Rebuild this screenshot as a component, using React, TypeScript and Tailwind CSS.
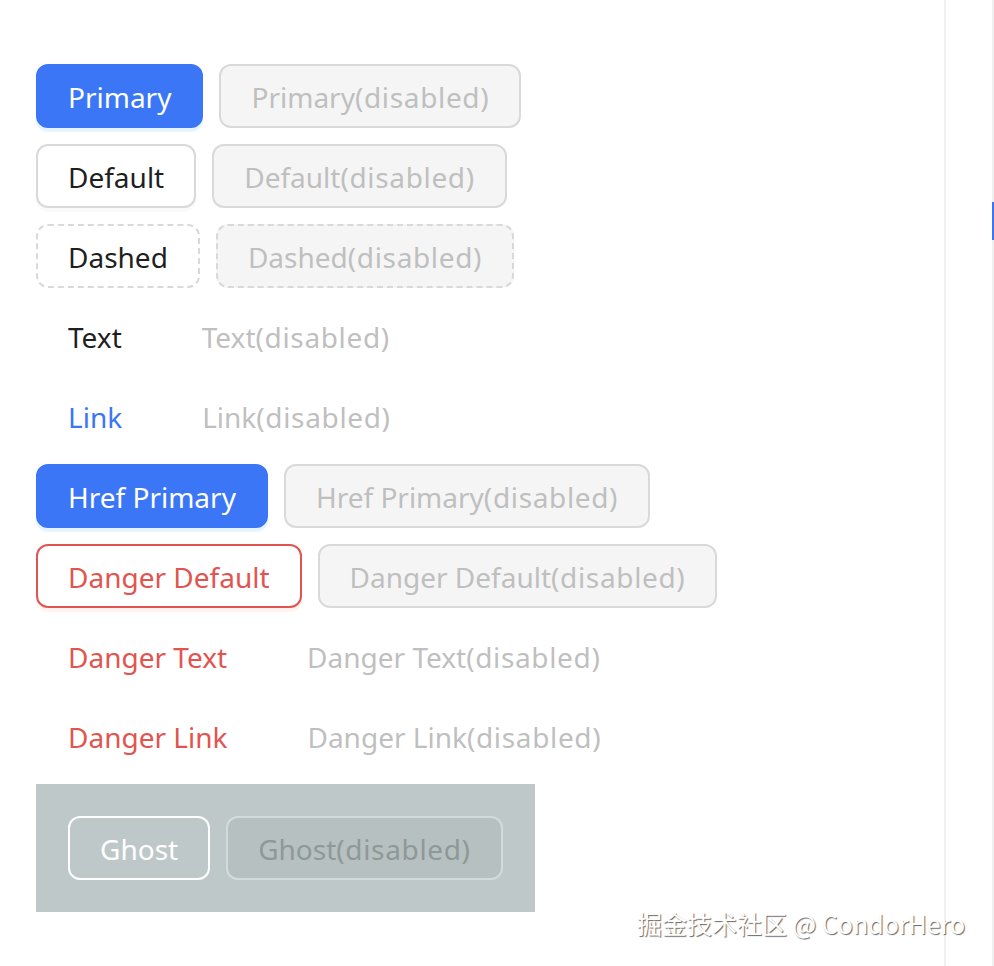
import React from "react";

type Kind =
  | "primary"
  | "default"
  | "dashed"
  | "text"
  | "link"
  | "dangerDefault"
  | "dangerText"
  | "dangerLink"
  | "ghost";

const base =
  "inline-flex h-16 items-center justify-center rounded-[12px] border-2 px-[30px] pt-[2px] text-[28px] leading-none whitespace-nowrap";

const styles: Record<Kind, string> = {
  primary: "border-[#3b76f6] bg-[#3b76f6] text-white shadow-[0_4px_0_rgba(5,145,255,0.1)]",
  default: "border-[#d9d9d9] bg-white text-[#1f1f1f] shadow-[0_4px_0_rgba(0,0,0,0.02)]",
  dashed: "border-dashed border-[#d9d9d9] bg-white text-[#1f1f1f]",
  text: "border-transparent text-[#1f1f1f]",
  link: "border-transparent text-[#3b76f6]",
  dangerDefault: "border-[#e25450] bg-white text-[#e25450] shadow-[0_4px_0_rgba(255,38,5,0.06)]",
  dangerText: "border-transparent text-[#e25450]",
  dangerLink: "border-transparent text-[#e25450]",
  ghost: "border-white bg-transparent text-white",
};

const disabledStyles: Record<Kind, string> = {
  primary: "border-[#d9d9d9] bg-[#f5f5f5] text-[#bfbfbf]",
  default: "border-[#d9d9d9] bg-[#f5f5f5] text-[#bfbfbf]",
  dashed: "border-dashed border-[#d9d9d9] bg-[#f5f5f5] text-[#bfbfbf]",
  text: "border-transparent text-[#bfbfbf]",
  link: "border-transparent text-[#bfbfbf]",
  dangerDefault: "border-[#d9d9d9] bg-[#f5f5f5] text-[#bfbfbf]",
  dangerText: "border-transparent text-[#bfbfbf]",
  dangerLink: "border-transparent text-[#bfbfbf]",
  ghost: "border-[#d3dada] bg-[rgba(0,0,0,0.04)] text-[#8f9898]",
};

function Btn({ kind, label, disabled }: { kind: Kind; label: string; disabled?: boolean }) {
  return (
    <button
      type="button"
      disabled={disabled}
      className={`${base} ${disabled ? disabledStyles[kind] + " cursor-not-allowed" : styles[kind]}`}
    >
      {label}
      {disabled && <span className="tracking-[0.65px]">(disabled)</span>}
    </button>
  );
}

const rows: { kind: Kind; label: string }[] = [
  { kind: "primary", label: "Primary" },
  { kind: "default", label: "Default" },
  { kind: "dashed", label: "Dashed" },
  { kind: "text", label: "Text" },
  { kind: "link", label: "Link" },
  { kind: "primary", label: "Href Primary" },
  { kind: "dangerDefault", label: "Danger Default" },
  { kind: "dangerText", label: "Danger Text" },
  { kind: "dangerLink", label: "Danger Link" },
];

export default function App() {
  return (
    <div
      className="relative flex h-[966px] w-full overflow-hidden bg-white"
      style={{ fontFamily: '"Noto Sans", "Noto Sans CJK SC", sans-serif' }}
    >
      <main className="flex flex-1 flex-col items-start gap-4 pl-9 pt-16">
        {rows.map((r) => (
          <div key={r.label} className="flex gap-4">
            <Btn kind={r.kind} label={r.label} />
            <Btn kind={r.kind} label={r.label} disabled />
          </div>
        ))}
        <div className="flex gap-4 bg-[#bec8c8] p-8">
          <Btn kind="ghost" label="Ghost" />
          <Btn kind="ghost" label="Ghost" disabled />
        </div>
      </main>

      <aside className="flex w-[50px] justify-end border-l-2 border-[#f0f0f0]">
        <div className="w-[2px] bg-[#f0f0f0]">
          <div className="mt-[202px] h-[38px] w-[2px] bg-[#3b76f6]" />
        </div>
      </aside>

      <div
        className="pointer-events-none absolute left-[637px] top-[905px] text-[25px] text-white [text-shadow:1px_1px_1px_rgba(0,0,0,0.6)]"
        style={{ fontFamily: '"Noto Sans CJK SC", "Noto Sans", sans-serif' }}
      >
        掘金技术社区 @ CondorHero
      </div>
    </div>
  );
}
